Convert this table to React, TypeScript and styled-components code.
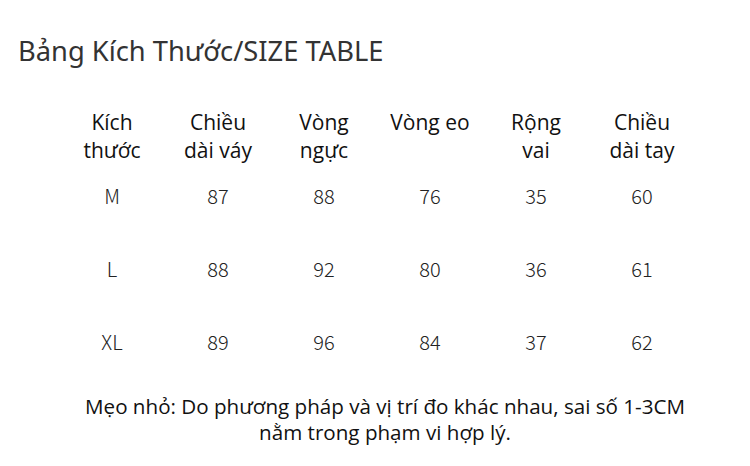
import styled, { createGlobalStyle } from "styled-components"

const Global = createGlobalStyle`
  html, body { margin: 0; padding: 0; background: #fff; }
  body { width: 750px; height: 466px; overflow: hidden; }
`

type row = { size: string; values: Array<number> }

const headers: Array<Array<string>> = [
  ["Kích", "thước"],
  ["Chiều", "dài váy"],
  ["Vòng", "ngực"],
  ["Vòng eo"],
  ["Rộng", "vai"],
  ["Chiều", "dài tay"],
]

const rows: Array<row> = [
  { size: "M", values: [87, 88, 76, 35, 60] },
  { size: "L", values: [88, 92, 80, 36, 61] },
  { size: "XL", values: [89, 96, 84, 37, 62] },
]

const Page = styled.div`
  width: 750px;
  height: 466px;
  padding: 34px 0 0 18px;
  box-sizing: border-box;
`

const Title = styled.h1`
  margin: 0;
  font-family: "Noto Sans", sans-serif;
  font-weight: 400;
  font-size: 27.3px;
  line-height: 34px;
  color: #333;
`

const Table = styled.div`
  display: grid;
  grid-template-columns: repeat(6, 106px);
  margin: 40px 0 0 41px;
`

const Head = styled.div`
  font-family: "Open Sans", sans-serif;
  font-weight: 500;
  font-size: 21px;
  line-height: 28px;
  color: #111;
  text-align: center;
  height: 51px;
`

const Cell = styled.div`
  font-family: "Noto Sans CJK SC", sans-serif;
  font-weight: 300;
  font-size: 20px;
  line-height: 73px;
  color: #222;
  text-align: center;
`

const Note = styled.p`
  margin: 15px 0 0 -18px;
  font-family: "Open Sans", sans-serif;
  font-weight: 500;
  font-size: 20.6px;
  line-height: 26px;
  color: #111;
  text-align: center;
  width: 770px;
`

export default function App(): JSX.Element {
  return (
    <Page>
      <Global />
      <Title>Bảng Kích Thước/SIZE TABLE</Title>
      <Table>
        {headers.map((h, i) => (
          <Head key={i}>
            {h.map((line, j) => (
              <div key={j}>{line}</div>
            ))}
          </Head>
        ))}
        {rows.map((r) => [
          <Cell key={r.size}>{r.size}</Cell>,
          ...r.values.map((v, k) => <Cell key={r.size + k}>{v}</Cell>),
        ])}
      </Table>
      <Note>
        Mẹo nhỏ: Do phương pháp và vị trí đo khác nhau, sai số 1-3CM
        <br />
        nằm trong phạm vi hợp lý.
      </Note>
    </Page>
  )
}
